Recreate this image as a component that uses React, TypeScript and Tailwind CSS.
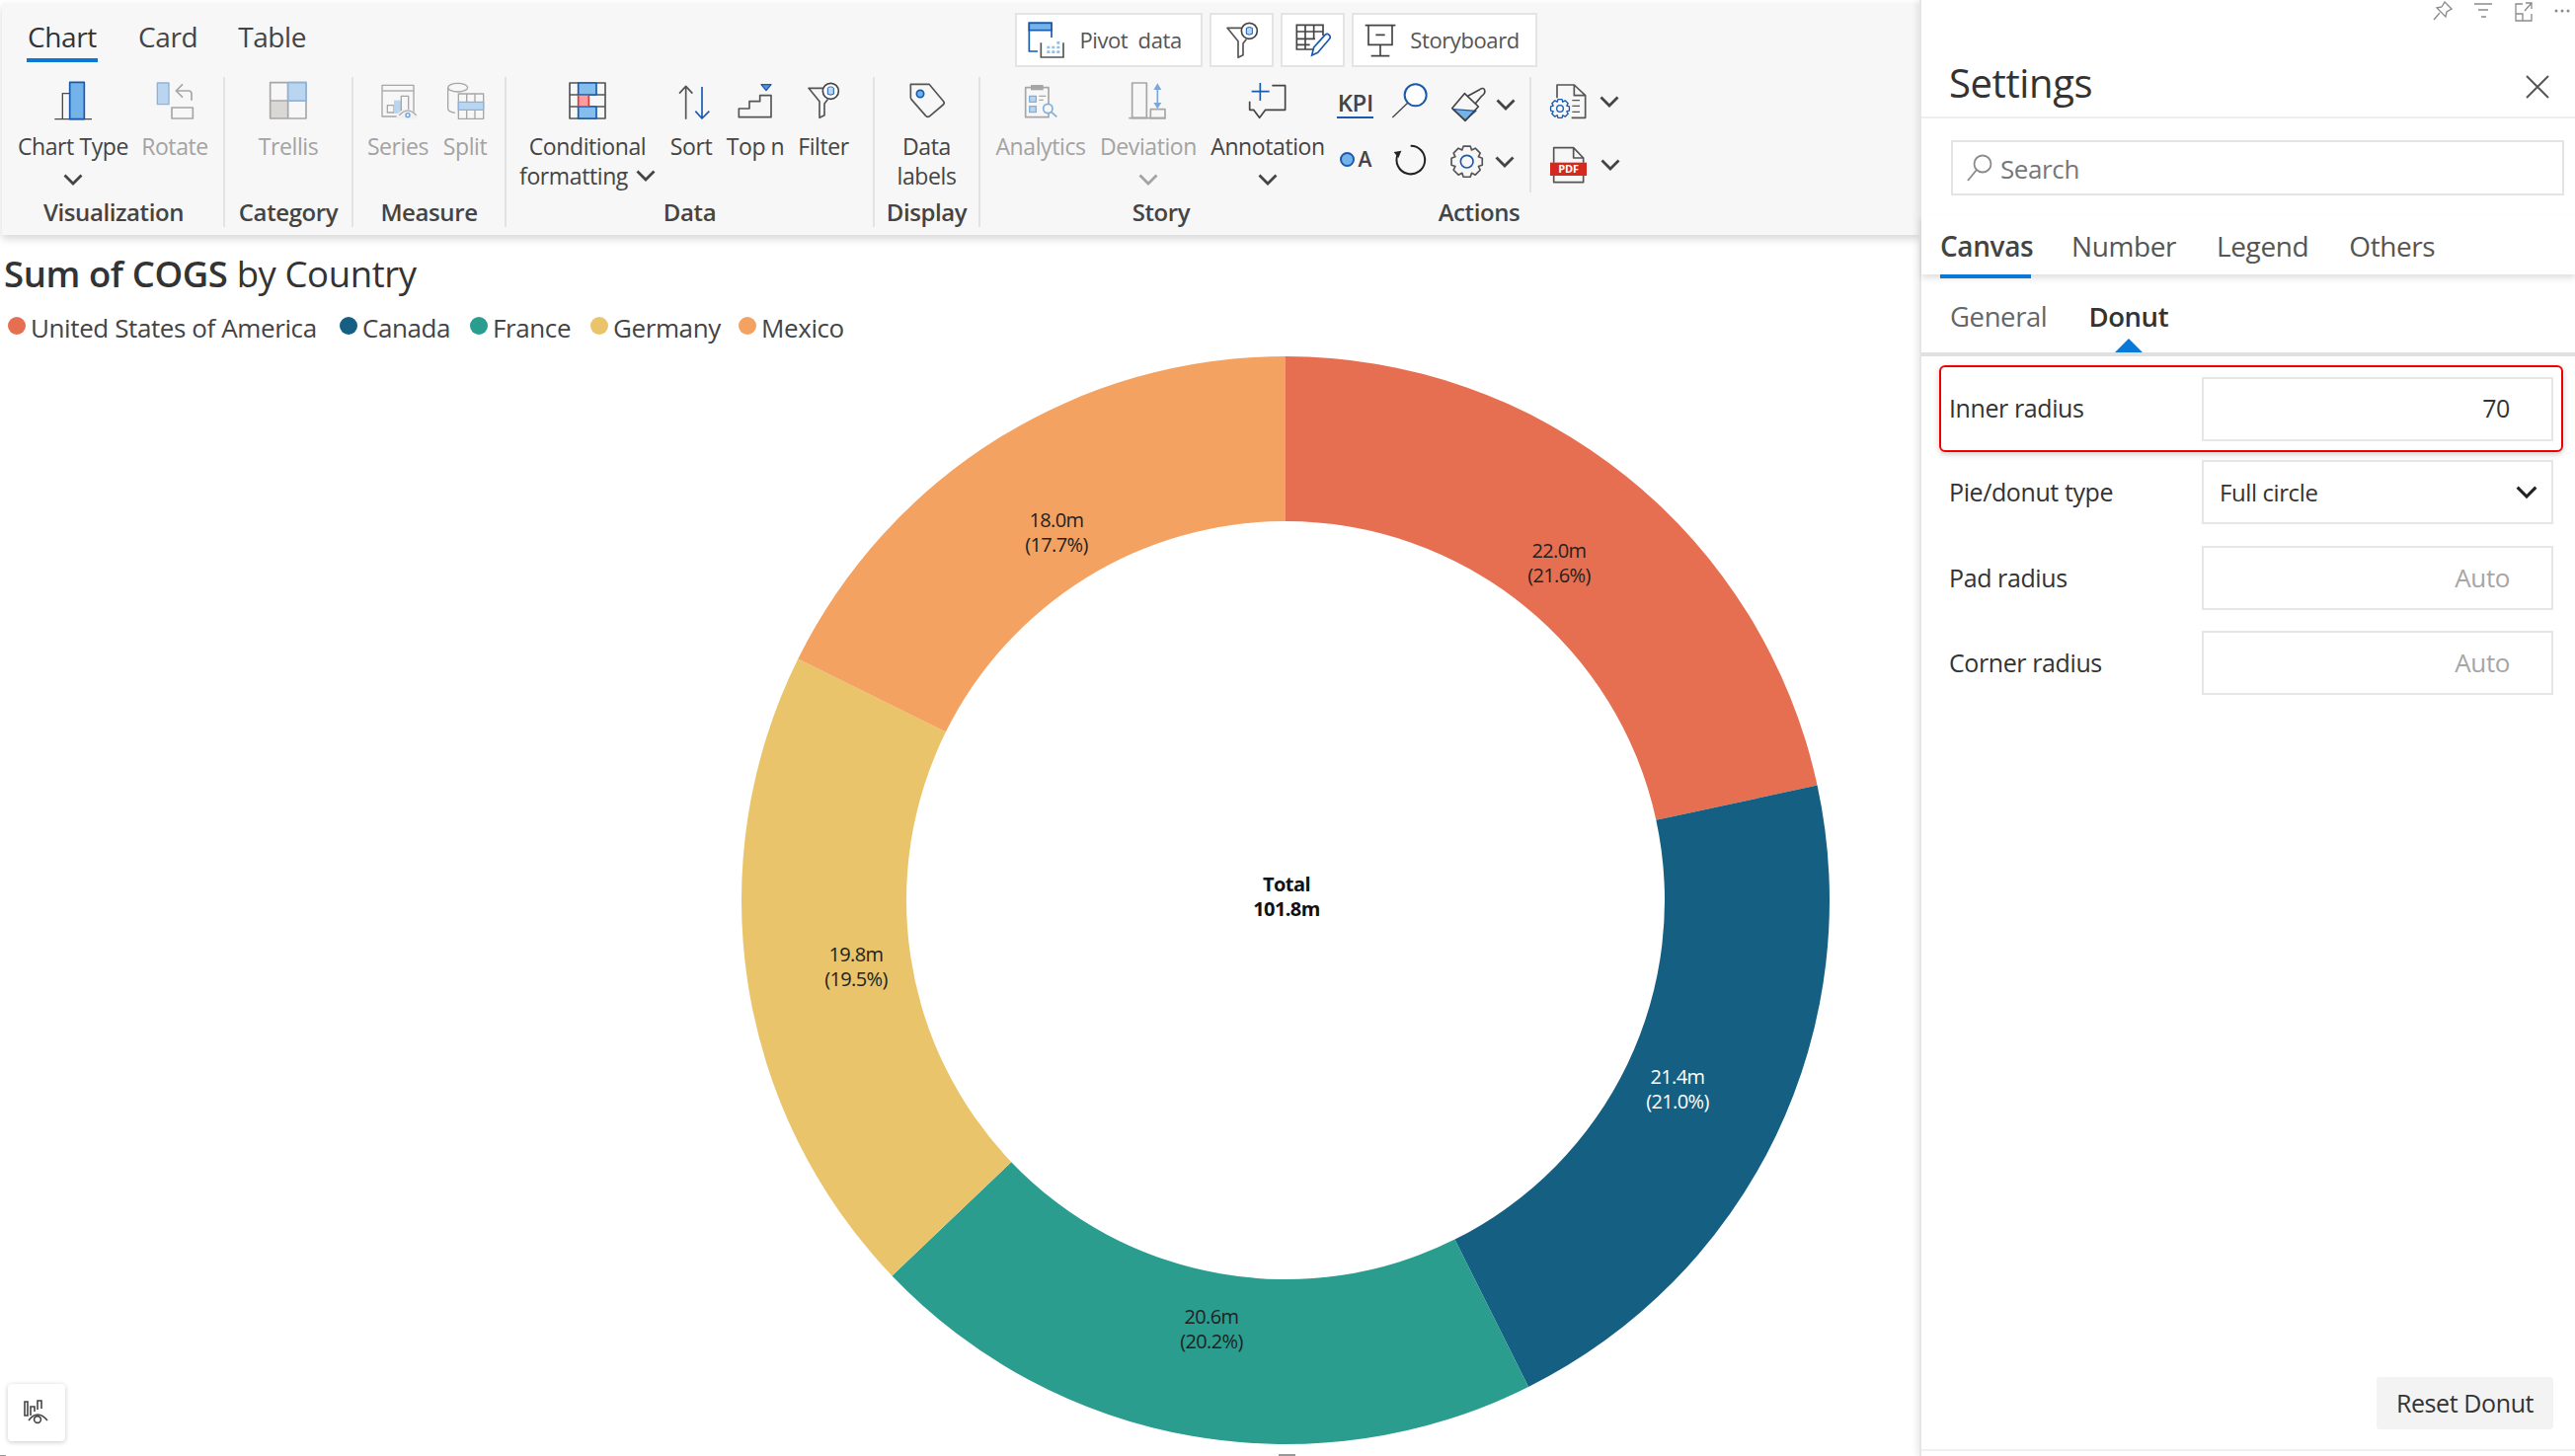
import React from 'react';

const BLUE = '#1a5aad';
const SKY = '#74b3ea';
const PALE = '#b9d5f0';
const PALE_EDGE = '#8db2dc';
const DARK = '#4a4a4a';
const GREY = '#a6a6a6';

// traced at 3x, so the svg is drawn at a third of its viewBox
const Ico: React.FC<{ x: number; y: number; w: number; h: number; children: React.ReactNode }> = ({ x, y, w, h, children }) => (
  <svg width={w / 3} height={h / 3} viewBox={`${x} ${y} ${w} ${h}`} fill="none" strokeLinejoin="round">
    {children}
  </svg>
);

const gearPath = (cx: number, cy: number, ro: number, ri: number, teeth: number) => {
  const pts: string[] = [];
  const step = (Math.PI * 2) / teeth;
  for (let i = 0; i < teeth; i++) {
    const a = i * step - Math.PI / 2;
    const offs: [number, number][] = [
      [-0.5, ri],
      [-0.28, ro],
      [0.28, ro],
      [0.5, ri],
    ];
    offs.forEach(([o, r]) => {
      const t = a + o * step;
      pts.push(`${(cx + Math.cos(t) * r).toFixed(1)} ${(cy + Math.sin(t) * r).toFixed(1)}`);
    });
  }
  return `M${pts.join(' L')} Z`;
};

const Chevron: React.FC<{ color?: string; size?: number }> = ({ color = '#444', size = 20 }) => (
  <svg width={size} height={size * 0.6} viewBox="0 0 20 12" fill="none">
    <path d="M1.5 1.5 L10 10 L18.5 1.5" stroke={color} strokeWidth="2.8" />
  </svg>
);

const ChartTypeIcon = () => (
  <Ico x={162} y={66} w={120} h={120}>
    <path d="M166 182 H279 M190 182 V104 H212" stroke={DARK} strokeWidth="4" />
    <rect x="212" y="70" width="44" height="112" fill={SKY} stroke={BLUE} strokeWidth="5" />
  </Ico>
);
const RotateIcon = () => (
  <Ico x={471} y={66} w={120} h={120}>
    <rect x="478" y="72" width="35" height="65" fill={PALE} stroke={PALE_EDGE} strokeWidth="4" />
    <path d="M582 125 V105 Q582 96 573 96 H535 M555 76 L535 96 L555 116" stroke={GREY} strokeWidth="5" />
    <rect x="522" y="147" width="64" height="33" stroke={GREY} strokeWidth="5" />
  </Ico>
);
const TrellisIcon = () => (
  <Ico x={816} y={66} w={120} h={120}>
    <rect x="821" y="126" width="54" height="54" fill="#d9d8d6" />
    <rect x="821" y="71" width="109" height="109" stroke={GREY} strokeWidth="5" />
    <path d="M875 71 V180 M821 126 H930" stroke={GREY} strokeWidth="5" />
    <rect x="875" y="71" width="55" height="55" fill={PALE} stroke={PALE_EDGE} strokeWidth="5" />
  </Ico>
);
const SeriesIcon = () => (
  <Ico x={1150} y={66} w={120} h={120}>
    <rect x="1162" y="79" width="96" height="95" stroke={GREY} strokeWidth="4" />
    <path d="M1162 96 H1258" stroke={GREY} strokeWidth="4" />
    <rect x="1178" y="140" width="20" height="22" stroke={GREY} strokeWidth="4" />
    <rect x="1198" y="125" width="22" height="40" fill={PALE} />
    <rect x="1220" y="112" width="22" height="45" stroke={GREY} strokeWidth="4" />
    <path d="M1206 182 V168 Q1236 136 1268 168 V182 Z" fill="#f1f1f1" />
    <path d="M1214 170 Q1240 143 1266 170" stroke={GREY} strokeWidth="4" />
    <circle cx="1240" cy="170" r="6" stroke="#6d9bd8" strokeWidth="4" />
  </Ico>
);
const SplitIcon = () => (
  <Ico x={1355} y={66} w={120} h={120}>
    <ellipse cx="1393" cy="86" rx="30" ry="13" stroke={GREY} strokeWidth="4" />
    <path d="M1363 86 V150 Q1363 160 1385 163" stroke={GREY} strokeWidth="4" />
    <rect x="1395" y="105" width="76" height="76" fill="#f7f7f7" stroke={GREY} strokeWidth="4" />
    <path d="M1420 105 V181 M1445 105 V181" stroke={GREY} strokeWidth="4" />
    <rect x="1395" y="130" width="76" height="24" fill={PALE} stroke={PALE_EDGE} strokeWidth="4" />
  </Ico>
);
const CondFormatIcon = () => (
  <Ico x={168} y={66} w={120} h={120}>
    <rect x="174" y="72" width="108" height="108" stroke="#555" strokeWidth="5" />
    <path d="M174 108 H282 M174 144 H282" stroke="#555" strokeWidth="5" />
    <rect x="200" y="72" width="55" height="36" fill="#85bdec" stroke={BLUE} strokeWidth="5" />
    <rect x="200" y="144" width="55" height="36" fill="#85bdec" stroke={BLUE} strokeWidth="5" />
    <rect x="200" y="110" width="32" height="32" fill="#ff9d9d" />
    <path d="M200 110 V142 M232 110 V142" stroke="#d33a3a" strokeWidth="5" />
  </Ico>
);
const SortIcon = () => (
  <Ico x={480} y={66} w={120} h={120}>
    <path d="M524 182 V82 M504 104 L524 82 L544 104" stroke="#555" strokeWidth="5" />
    <path d="M573 84 V180 M553 158 L573 180 L595 158" stroke={BLUE} strokeWidth="5" />
  </Ico>
);
const TopNIcon = () => (
  <Ico x={678} y={66} w={120} h={120}>
    <path d="M688 176 V150 H720 V128 H752 V110 H786 V176 Z" stroke="#555" strokeWidth="5" />
    <path d="M756 77 H786 L771 95 Z" fill="#5b93d8" stroke={BLUE} strokeWidth="4" />
  </Ico>
);
const FilterIcon = () => (
  <Ico x={882} y={66} w={120} h={120}>
    <path d="M940 88 H897 L930 128 V178 L945 170 V135 L955 122" stroke="#555" strokeWidth="5" />
    <circle cx="964" cy="97" r="24" fill="#fff" stroke="#444" strokeWidth="5" />
    <ellipse cx="964" cy="88" rx="9" ry="4" stroke={BLUE} strokeWidth="3" />
    <path d="M955 88 V106 Q964 111 973 106 V88" fill={PALE} stroke={BLUE} strokeWidth="3" />
  </Ico>
);
const TagIcon = () => (
  <Ico x={1196} y={66} w={120} h={120}>
    <path d="M1206 76 H1262 L1306 128 Q1310 134 1305 138 L1265 172 Q1258 178 1252 172 L1208 122 Q1205 118 1206 112 Z" stroke="#555" strokeWidth="5" />
    <circle cx="1235" cy="105" r="11" fill={SKY} stroke={BLUE} strokeWidth="5" />
  </Ico>
);
const AnalyticsIcon = () => (
  <Ico x={102} y={66} w={120} h={120}>
    <rect x="116" y="86" width="70" height="90" stroke={GREY} strokeWidth="5" />
    <rect x="132" y="78" width="38" height="16" fill={GREY} />
    <rect x="128" y="112" width="20" height="18" fill={PALE} stroke="#7fb0de" strokeWidth="4" />
    <rect x="128" y="143" width="20" height="18" fill={PALE} stroke="#7fb0de" strokeWidth="4" />
    <path d="M157 112 H178 M157 124 H170" stroke={GREY} strokeWidth="4" />
    <circle cx="184" cy="150" r="14" fill="#f7f7f7" stroke="#7fb0de" strokeWidth="5" />
    <path d="M194 160 L211 175" stroke="#7fb0de" strokeWidth="5" />
  </Ico>
);
const DeviationIcon = () => (
  <Ico x={429} y={66} w={120} h={120}>
    <rect x="440" y="72" width="44" height="106" stroke={GREY} strokeWidth="5" />
    <path d="M430 179 H542" stroke={GREY} strokeWidth="5" />
    <rect x="496" y="152" width="44" height="27" stroke={GREY} strokeWidth="5" />
    <path d="M517 85 V140" stroke="#7fa6d8" strokeWidth="5" />
    <path d="M505 93 L517 73 L529 93 Z M505 132 L517 151 L529 132 Z" fill="#7fa6d8" />
  </Ico>
);
const AnnotationIcon = () => (
  <Ico x={795} y={66} w={120} h={120}>
    <path d="M868 80 H908 V154 H848 L830 178 L812 154 H800 V128" stroke="#444" strokeWidth="5" />
    <path d="M832 72 V126 M806 98 H860" stroke={BLUE} strokeWidth="5" />
  </Ico>
);
const MagnifierIcon = () => (
  <Ico x={205} y={75} w={125} h={115}>
    <circle cx="285" cy="115" r="33" fill="#fff" stroke={BLUE} strokeWidth="6" />
    <path d="M215 183 L262 138" stroke="#444" strokeWidth="4" />
  </Ico>
);
const BrushIcon = () => (
  <Ico x={384} y={87} w={114} h={112}>
    <path d="M396 158 L465 163 L432 191 Z" fill={SKY} stroke={BLUE} strokeWidth="4" />
    <path d="M392 155 L430 110 L472 150 L432 193 Z" stroke="#444" strokeWidth="5" />
    <path d="M440 118 L476 98 Q488 90 491 100 Q494 110 482 118 L462 142" stroke="#444" strokeWidth="5" />
  </Ico>
);
const RefreshIcon = () => (
  <Ico x={214} y={254} w={108} h={100}>
    <path d="M270 262 A43 43 0 1 1 231 288" stroke="#222" strokeWidth="6" />
    <path d="M219 281 L242 277 L233 299 Z" fill="#222" />
  </Ico>
);
const GearIcon = () => (
  <Ico x={386} y={263} w={106} h={106}>
    <path d={gearPath(439, 316, 48, 38, 8)} stroke="#555" strokeWidth="5" />
    <circle cx="439" cy="316" r="19" stroke={BLUE} strokeWidth="5" />
  </Ico>
);
const DocGearIcon = () => (
  <Ico x={692} y={72} w={114} h={111}>
    <path d="M716 118 V78 H768 L802 110 V178 H760 M768 78 V110 H802" stroke="#555" strokeWidth="5" />
    <path d="M762 125 H785 M762 142 H785 M762 160 H785" stroke="#555" strokeWidth="4" />
    <path d={gearPath(725, 150, 29, 22, 8)} fill="#f7f7f7" stroke={BLUE} strokeWidth="4" />
    <circle cx="725" cy="150" r="10" stroke={BLUE} strokeWidth="4" />
  </Ico>
);
const PdfIcon = () => (
  <Ico x={688} y={272} w={118} h={114}>
    <path d="M702 322 V277 H762 L792 308 V322 M762 277 V308 H792 M702 362 V382 H792 V362" stroke="#555" strokeWidth="5" />
    <rect x="691" y="322" width="111" height="40" fill="#d4291e" />
    <text x="747" y="354" textAnchor="middle" fontSize="33" fontWeight="700" fill="#fff" fontFamily="Open Sans, sans-serif">PDF</text>
  </Ico>
);
const PivotIcon = () => (
  <svg width="38" height="38" viewBox="0 0 114 114" fill="none">
    <path d="M30 90 H4 V4 H72 V48" stroke={BLUE} strokeWidth="5" />
    <rect x="4" y="4" width="68" height="22" fill={SKY} stroke={BLUE} strokeWidth="5" />
    <path d="M40 64 V108 H108 V64" stroke="#555" strokeWidth="5" />
    <path d="M58 92 h9 M73 92 h9 M88 92 h9 M73 78 h9 M88 78 h9 M88 64 h9 M58 78 h9" stroke="#8fc0ee" strokeWidth="8" />
  </svg>
);
const TableEditIcon = () => (
  <svg width="36" height="34" viewBox="0 0 108 102" fill="none">
    <path d="M60 78 H4 V4 H84 V36 M4 24 H84 M4 46 H60 M4 64 H44 M30 4 V78 M56 4 V46" stroke="#444" strokeWidth="5" />
    <path d="M50 96 L56 72 L90 34 Q98 28 104 36 Q108 42 102 48 L68 88 Z" fill="#fff" stroke={BLUE} strokeWidth="5" />
  </svg>
);
const StoryboardIcon = () => (
  <svg width="32" height="34" viewBox="0 0 96 102" fill="none">
    <path d="M2 5 H94 M12 5 V64 H84 V5 M34 34 H62 M48 64 V98 M20 98 H76" stroke="#444" strokeWidth="5" />
  </svg>
);

const Tool: React.FC<{
  w: string;
  icon: React.ReactNode;
  label: React.ReactNode;
  muted?: boolean;
  chevron?: boolean;
}> = ({ w, icon, label, muted, chevron }) => (
  <div className={`${w} flex flex-col items-center pt-[4px]`}>
    <div className="h-[40px] flex justify-center">{icon}</div>
    <div className={`mt-[11px] text-center leading-[30px] text-[23px] whitespace-nowrap ${muted ? 'text-[#a3a3a3]' : 'text-[#444]'}`}>
      {label}
    </div>
    {chevron && (
      <div className="mt-[13px]">
        <Chevron color={muted ? '#a3a3a3' : '#444'} />
      </div>
    )}
  </div>
);

const Group: React.FC<{ w: string; label: string; children: React.ReactNode; labelClass?: string; border?: boolean }> = ({
  w,
  label,
  children,
  labelClass = '',
  border = true,
}) => (
  <div className={`${w} h-[152px] flex flex-col ${border ? 'border-r-2 border-[#e3e3e3]' : ''}`}>
    <div className="h-[121px] flex">{children}</div>
    <div className={`h-[31px] leading-[31px] text-center text-[24px] font-semibold text-[#444] whitespace-nowrap ${labelClass}`}>{label}</div>
  </div>
);

const TopButton: React.FC<{ w: string; children: React.ReactNode }> = ({ w, children }) => (
  <div className={`${w} h-[55px] bg-white border-2 border-[#e4e4e4] flex items-center justify-center gap-[14px] text-[22px] text-[#555]`}>
    {children}
  </div>
);

const Ribbon = () => (
  <div className="ml-[2px] mt-[3px] w-[1942px] h-[235px] bg-[#f7f7f7] shadow-[0_4px_8px_rgba(0,0,0,0.16)] relative z-[1]">
    <div className="h-[75px] flex">
      <div className="flex pl-[25px] gap-[41px] pt-[15px] text-[28px] h-[60px] leading-[38px] text-[#444]">
        <div className="w-[72px] h-[45px] border-b-[4px] border-[#0a78d6] text-center text-[#333]">Chart</div>
        <div>Card</div>
        <div>Table</div>
      </div>
      <div className="ml-[718px] mt-[10px] flex gap-[7px]">
        <TopButton w="w-[190px] pr-[8px]">
          <PivotIcon />
          <span className="[word-spacing:5px]">Pivot data</span>
        </TopButton>
        <TopButton w="w-[65px]">
          <svg width="40" height="40" viewBox="882 66 120 120" fill="none" strokeLinejoin="round">
            <path d="M940 88 H897 L930 128 V178 L945 170 V135 L955 122" stroke="#555" strokeWidth="5" />
            <circle cx="964" cy="97" r="24" fill="#fff" stroke="#444" strokeWidth="5" />
            <path d="M955 88 V106 Q964 111 973 106 V88 Q964 83 955 88" fill={PALE} stroke={BLUE} strokeWidth="3" />
          </svg>
        </TopButton>
        <TopButton w="w-[65px]">
          <TableEditIcon />
        </TopButton>
        <TopButton w="w-[188px] pr-[5px]">
          <StoryboardIcon />
          <span>Storyboard</span>
        </TopButton>
      </div>
    </div>
    <div className="flex">
      <Group w="w-[226px]" label="Visualization" labelClass="pl-[2px]">
        <div className="w-[12px]" />
        <Tool w="w-[120px]" icon={<ChartTypeIcon />} label="Chart Type" chevron />
        <Tool w="w-[86px]" icon={<RotateIcon />} label="Rotate" muted />
      </Group>
      <Group w="w-[130px]" label="Category">
        <Tool w="w-full" icon={<TrellisIcon />} label="Trellis" muted />
      </Group>
      <Group w="w-[155px]" label="Measure">
        <Tool w="w-[90px]" icon={<SeriesIcon />} label="Series" muted />
        <Tool w="w-[46px]" icon={<SplitIcon />} label="Split" muted />
      </Group>
      <Group w="w-[373px]" label="Data">
        <Tool
          w="w-[164px]"
          icon={<CondFormatIcon />}
          label={
            <>
              Conditional
              <br />
              <span className="inline-flex items-center gap-[8px]">
                formatting <Chevron />
              </span>
            </>
          }
        />
        <Tool w="w-[46px]" icon={<SortIcon />} label="Sort" />
        <Tool w="w-[84px]" icon={<TopNIcon />} label="Top n" />
        <Tool w="w-[54px]" icon={<FilterIcon />} label="Filter" />
      </Group>
      <Group w="w-[107px]" label="Display">
        <Tool
          w="w-full"
          icon={<TagIcon />}
          label={
            <>
              Data
              <br />
              labels
            </>
          }
        />
      </Group>
      <Group w="w-[352px]" label="Story" labelClass="pl-[14px]" border={false}>
        <Tool w="w-[122px]" icon={<AnalyticsIcon />} label="Analytics" muted />
        <Tool w="w-[96px]" icon={<DeviationIcon />} label="Deviation" muted chevron />
        <div className="w-[12px]" />
        <Tool w="w-[122px]" icon={<AnnotationIcon />} label="Annotation" chevron />
      </Group>
      <Group w="w-[296px]" label="Actions" labelClass="pl-[10px]" border={false}>
        <div className="w-[54px] flex flex-col items-center pl-[2px]">
          <div className="mt-[12px] h-[30px] w-[37px] border-b-[2px] border-[#1a5aad] text-center text-[24px] leading-[28px] font-semibold text-[#444]">KPI</div>
          <div className="mt-[30px] flex items-center gap-[4px]">
            <span className="w-[15px] h-[15px] rounded-full bg-[#74b3ea] border-2 border-[#1a5aad]" />
            <span className="text-[21px] font-semibold text-[#444] leading-[22px]">A</span>
          </div>
        </div>
        <div className="w-[59px] flex flex-col items-center">
          <div className="mt-[5px]">
            <MagnifierIcon />
          </div>
          <div className="mt-[24px]">
            <RefreshIcon />
          </div>
        </div>
        <div className="w-[94px] h-[117px] border-r-2 border-[#e3e3e3] pl-[11px]">
          <div className="mt-[9px] flex items-center gap-[9px]">
            <BrushIcon />
            <Chevron />
          </div>
          <div className="mt-[22px] flex items-center gap-[10px]">
            <GearIcon />
            <Chevron />
          </div>
        </div>
        <div className="flex-1 pl-[18px]">
          <div className="mt-[6px] flex items-center gap-[13px]">
            <DocGearIcon />
            <Chevron />
          </div>
          <div className="mt-[27px] flex items-center gap-[13px]">
            <PdfIcon />
            <Chevron />
          </div>
        </div>
      </Group>
    </div>
  </div>
);

const slices = [
  { name: 'United States of America', value: 22.0, color: '#e76f51', label: '22.0m', pct: '(21.6%)', x: 1579, y: 559, text: '#222' },
  { name: 'Canada', value: 21.4, color: '#156082', label: '21.4m', pct: '(21.0%)', x: 1699, y: 1092, text: '#fff' },
  { name: 'France', value: 20.6, color: '#2a9d8f', label: '20.6m', pct: '(20.2%)', x: 1227, y: 1335, text: '#222' },
  { name: 'Germany', value: 19.8, color: '#e9c46a', label: '19.8m', pct: '(19.5%)', x: 867, y: 968, text: '#222' },
  { name: 'Mexico', value: 18.0, color: '#f4a261', label: '18.0m', pct: '(17.7%)', x: 1070, y: 528, text: '#222' },
];

const Donut = () => {
  const total = slices.reduce((s, d) => s + d.value, 0);
  const R = 551;
  const r = 384;
  const c = 555;
  // page position of the svg centre, data label spots were read off the page
  const ox = 1302 - c;
  const oy = 913 - c;
  let acc = 0;
  return (
    <svg width={1110} height={1110} viewBox="0 0 1110 1110" fontFamily="Open Sans, sans-serif" fontSize="20" letterSpacing="-0.6">
      {slices.map((d) => {
        const a0 = (acc / total) * Math.PI * 2;
        acc += d.value;
        const a1 = (acc / total) * Math.PI * 2;
        const pt = (rad: number, a: number) => `${(c + Math.sin(a) * rad).toFixed(2)} ${(c - Math.cos(a) * rad).toFixed(2)}`;
        return (
          <path
            key={d.name}
            fill={d.color}
            d={`M${pt(R, a0)} A${R} ${R} 0 0 1 ${pt(R, a1)} L${pt(r, a1)} A${r} ${r} 0 0 0 ${pt(r, a0)} Z`}
          />
        );
      })}
      {slices.map((d) => (
        <text key={d.label} textAnchor="middle" fill={d.text}>
          <tspan x={d.x - ox} y={d.y - oy + 7}>{d.label}</tspan>
          <tspan x={d.x - ox} y={d.y - oy + 32}>{d.pct}</tspan>
        </text>
      ))}
      <text textAnchor="middle" fill="#111" fontWeight="700">
        <tspan x={c + 1} y={897 - oy + 7}>Total</tspan>
        <tspan x={c + 1} y={922 - oy + 7}>101.8m</tspan>
      </text>
    </svg>
  );
};

const LegendItem: React.FC<{ name: string; color: string; w: string }> = ({ name, color, w }) => (
  <div className={`${w} flex items-center gap-[5px]`}>
    <span className="w-[18px] h-[18px] rounded-full shrink-0 -mt-[4px]" style={{ backgroundColor: color }} />
    <span className="whitespace-nowrap">{name}</span>
  </div>
);

const ChartArea = () => (
  <div className="relative flex-1 overflow-hidden">
    <div className="pl-[4px] pt-[15px] h-[49px] text-[36.5px] leading-[48px] text-[#333] whitespace-nowrap">
      <span className="font-semibold">Sum of COGS</span> by Country
    </div>
    <div className="mt-[27px] pl-[8px] flex text-[26px] leading-[36px] text-[#444]">
      <LegendItem name="United States of America" color={slices[0].color} w="w-[336px]" />
      <LegendItem name="Canada" color={slices[1].color} w="w-[132px]" />
      <LegendItem name="France" color={slices[2].color} w="w-[122px]" />
      <LegendItem name="Germany" color={slices[3].color} w="w-[150px]" />
      <LegendItem name="Mexico" color={slices[4].color} w="w-[110px]" />
    </div>
    <div className="ml-[747px] mt-[7px]">
      <Donut />
    </div>
    <div className="absolute left-[8px] bottom-[15px] w-[58px] h-[58px] rounded-[4px] bg-white shadow-[0_1px_5px_rgba(0,0,0,0.22)] flex items-center justify-center">
      <svg width="28" height="26" viewBox="0 0 28 26" fill="none" stroke="#444" strokeWidth="1.6">
        <path d="M2 2 H5 V16 H2 Z M8 16 V7 H12 V12 M15 10 V1 H19 V9" />
        <path d="M6 21 Q15 9 25 21" />
        <circle cx="15" cy="20" r="3.4" />
      </svg>
    </div>
    <div className="absolute left-0 bottom-0 w-[6px] h-[1px] bg-[#999]" />
    <div className="absolute left-[1295px] bottom-0 w-[17px] h-[2px] bg-[#999]" />
  </div>
);

const TopIcons = () => (
  <div className="h-[22px] flex justify-end pr-[4px] gap-[21px] pt-[1px]">
    <svg width="20" height="20" viewBox="0 0 20 20" fill="none" stroke="#8a8a8a" strokeWidth="1.3">
      <path d="M12 1 L19 8 L14 11 L13 16 L4 7 L9 6 Z M7 12 L1 19" />
    </svg>
    <svg width="20" height="20" viewBox="0 0 20 20" fill="none" stroke="#8a8a8a" strokeWidth="1.4">
      <path d="M1 3 H19 M5 9 H15 M8 16 H13" />
    </svg>
    <svg width="20" height="22" viewBox="0 0 20 22" fill="none" stroke="#8a8a8a" strokeWidth="1.3">
      <path d="M9 3 H2 V20 H18 V13 M2 13 H9 V20 M11 10 L18 2 M12 2 H18 V8" />
    </svg>
    <svg width="17" height="20" viewBox="0 0 17 20" fill="#8a8a8a">
      <circle cx="2" cy="10" r="1.5" />
      <circle cx="8" cy="10" r="1.5" />
      <circle cx="14" cy="10" r="1.5" />
    </svg>
  </div>
);

const FieldRow: React.FC<{ label: string; children: React.ReactNode; className?: string }> = ({ label, children, className = '' }) => (
  <div className={`flex items-center pl-[28px] pr-[22px] ${className}`}>
    <div className="w-[256px] text-[25px] text-[#333]">{label}</div>
    <div className="w-[356px] h-[65px] border-2 border-[#e6e6e6] flex items-center text-[25px] bg-white">{children}</div>
  </div>
);

const SettingsPanel = () => (
  <div className="w-[664px] h-[1475px] border-l-2 border-[#e6e6e6] bg-white relative z-[2] shadow-[-3px_0_6px_rgba(0,0,0,0.08)] flex flex-col">
    <TopIcons />
    <div className="h-[98px] border-b-2 border-[#eeeeee] flex items-center justify-between pl-[28px] pr-[26px]">
      <div className="text-[40px] text-[#333] leading-[52px] pt-[28px]">Settings</div>
      <svg className="mt-[36px]" width="24" height="24" viewBox="0 0 24 24" fill="none" stroke="#555" strokeWidth="2">
        <path d="M1 1 L23 23 M23 1 L1 23" />
      </svg>
    </div>
    <div className="ml-[30px] mt-[22px] w-[621px] h-[56px] border-2 border-[#e4e4e4] flex items-center pl-[14px] gap-[8px] text-[26px] text-[#777]">
      <svg width="26" height="28" viewBox="0 0 26 28" fill="none" stroke="#8a8a8a" strokeWidth="1.8">
        <circle cx="16" cy="10" r="8.5" />
        <path d="M10 16 L1 27" />
      </svg>
      <span className="pt-[3px]">Search</span>
    </div>
    <div className="mt-[20px] h-[60px] shadow-[0_4px_6px_rgba(0,0,0,0.12)] flex pl-[19px] gap-[41px] text-[28px] leading-[62px] text-[#555] relative">
      <div className="w-[92px] h-[64px] border-b-[4px] border-[#0a78d6] font-semibold text-[#444] text-center">Canvas</div>
      <div>Number</div>
      <div>Legend</div>
      <div>Others</div>
    </div>
    <div className="h-[83px] border-b-4 border-[#e0e0e0] flex pl-[29px] gap-[42px] pt-[20px] text-[27.5px] leading-[46px] text-[#666]">
      <div>General</div>
      <div className="relative h-[59px] font-semibold text-[#333]">
        Donut
        <div className="absolute left-1/2 -translate-x-1/2 bottom-0 w-0 h-0 border-l-[14px] border-r-[14px] border-b-[14px] border-l-transparent border-r-transparent border-b-[#0a78d6]" />
      </div>
    </div>
    <div className="mt-[9px] ml-[18px] w-[632px] h-[88px] rounded-[6px] border-2 border-[#f00000] shadow-[0_2px_6px_rgba(0,0,0,0.2)] flex items-center pl-[8px]">
      <div className="w-[256px] text-[25px] text-[#333]">Inner radius</div>
      <div className="w-[356px] h-[65px] border-2 border-[#e6e6e6] flex items-center justify-end pr-[42px] text-[25px] text-[#333]">70</div>
    </div>
    <FieldRow label="Pie/donut type" className="mt-[8px]">
      <span className="pl-[16px] text-[#333] text-[24px]">Full circle</span>
      <span className="ml-auto mr-[14px] flex">
        <Chevron color="#222" size={22} />
      </span>
    </FieldRow>
    <FieldRow label="Pad radius" className="mt-[22px]">
      <span className="ml-auto pr-[42px] text-[#a6a6a6] text-[26px]">Auto</span>
    </FieldRow>
    <FieldRow label="Corner radius" className="mt-[21px]">
      <span className="ml-auto pr-[42px] text-[#a6a6a6] text-[26px]">Auto</span>
    </FieldRow>
    <div className="mt-auto h-[80px] pt-[5px] border-b-2 border-[#f0f0f0] mb-[5px] flex justify-end items-start pr-[22px]">
      <div className="w-[179px] h-[53px] rounded-[4px] bg-[#f3f3f3] text-[25px] leading-[53px] text-center text-[#333]">Reset Donut</div>
    </div>
  </div>
);

export default function App() {
  return (
    <div className="w-[2608px] h-[1475px] bg-white flex overflow-hidden font-['Open_Sans',sans-serif] tracking-[-0.025em]">
      <div className="w-[1944px] h-full flex flex-col">
        <Ribbon />
        <ChartArea />
      </div>
      <SettingsPanel />
    </div>
  );
}
